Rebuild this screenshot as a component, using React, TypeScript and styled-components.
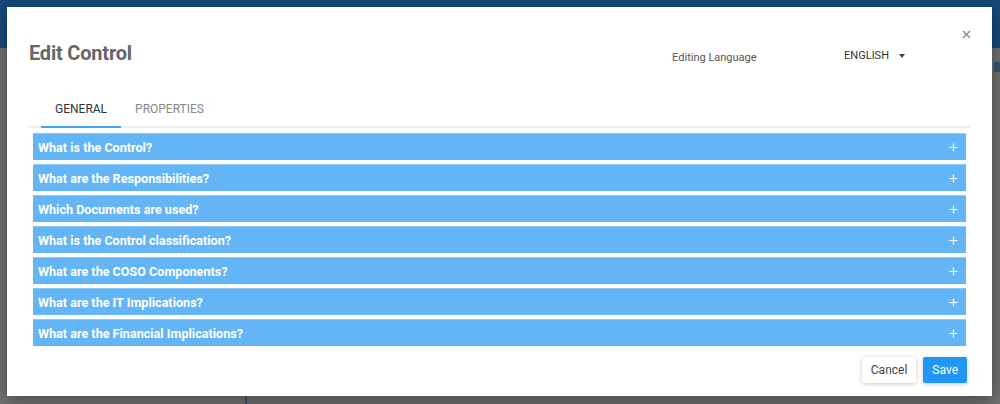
import React from 'react';
import styled, { createGlobalStyle } from 'styled-components';

const GlobalStyle = createGlobalStyle`
  html, body {
    margin: 0;
    padding: 0;
    width: 1000px;
    height: 404px;
    overflow: hidden;
    font-family: Roboto, 'Liberation Sans', sans-serif;
  }
`;

const Page = styled.div`
  position: relative;
  width: 1000px;
  height: 404px;
  background: #b9b9b9;
  display: flex;
  flex-direction: column;
`;

const AppBar = styled.div`
  height: 48px;
  background: #237bc6;
`;

const PageBody = styled.div`
  flex: 1;
  display: flex;
`;

const Sidebar = styled.div`
  width: 245px;
  border-right: 2px solid #5d8fbf;
  background: #bdbdbd;
`;

const Content = styled.div`
  flex: 1;
  display: flex;
  justify-content: flex-end;
  padding-top: 14px;
`;

const PageChip = styled.div`
  width: 6px;
  height: 10px;
  background: #5d8fbf;
`;

const Overlay = styled.div`
  position: absolute;
  inset: 0;
  background: rgba(0, 0, 0, 0.4);
  display: flex;
  padding: 7px 8px 8px 7px;
`;

const Modal = styled.div`
  position: relative;
  width: 985px;
  height: 389px;
  background: #fff;
  box-shadow: 0 4px 16px rgba(0, 0, 0, 0.35);
  display: flex;
  flex-direction: column;
  padding: 34px 22px 0 22px;
  box-sizing: border-box;
`;

const CloseButton = styled.button`
  position: absolute;
  top: 19px;
  right: 18px;
  width: 16px;
  height: 16px;
  padding: 0;
  border: none;
  background: none;
  display: grid;
  place-items: center;
  cursor: pointer;
`;

const Header = styled.div`
  display: flex;
  align-items: flex-start;
  height: 24px;
`;

const Title = styled.h2`
  margin: 0;
  flex: 1;
  font-size: 20px;
  line-height: 24px;
  font-weight: 700;
  color: #666;
  letter-spacing: -0.2px;
`;

const LangLabel = styled.span`
  font-size: 11px;
  line-height: 16px;
  margin-top: 9px;
  color: #555;
  width: 172px;
`;

const LangSelect = styled.div`
  display: flex;
  align-items: center;
  gap: 10px;
  margin-top: 7px;
  margin-right: 65px;
  font-size: 11px;
  line-height: 16px;
  color: #333;
`;

const Caret = styled.span`
  width: 0;
  height: 0;
  border-left: 3.5px solid transparent;
  border-right: 3.5px solid transparent;
  border-top: 4px solid #444;
  margin-top: -1px;
`;

const TabBar = styled.div`
  display: flex;
  margin-top: 27px;
  padding-left: 12px;
  border-bottom: 2px solid #eeeeee;
`;

const Tab = styled.div<{ $active?: boolean }>`
  height: 34px;
  padding: 0 14px;
  display: flex;
  align-items: center;
  font-size: 12px;
  text-transform: uppercase;
  color: ${(p) => (p.$active ? '#333' : '#888')};
  border-bottom: 2px solid ${(p) => (p.$active ? '#42a5f5' : 'transparent')};
  margin-bottom: -2px;
`;

const Accordion = styled.div`
  display: flex;
  flex-direction: column;
  gap: 4px;
  margin: 5px 4px 0 4px;
`;

const Section = styled.div`
  height: 27px;
  background: #64b5f6;
  border-top: 1px solid #8cc8f8;
  box-sizing: border-box;
  display: flex;
  align-items: center;
  justify-content: space-between;
  padding: 0 8px 0 5px;
  color: #fff;
  font-size: 12.6px;
  font-weight: 700;
`;

const Footer = styled.div`
  display: flex;
  justify-content: flex-end;
  gap: 7px;
  margin-top: 11px;
  padding-right: 3px;
`;

const Button = styled.button<{ $primary?: boolean }>`
  height: 26px;
  padding: 0 9px;
  border: none;
  border-radius: 2px;
  font-family: Roboto, 'Liberation Sans', sans-serif;
  font-size: 12px;
  color: ${(p) => (p.$primary ? '#fff' : '#444')};
  background: ${(p) => (p.$primary ? '#2196f3' : '#fff')};
  box-shadow: 0 1px 4px rgba(0, 0, 0, 0.22);
  cursor: pointer;
`;

const Plus = () => (
  <svg width="9" height="9" viewBox="0 0 9 9">
    <path d="M4.5 0.5v8M0.5 4.5h8" stroke="#fff" strokeWidth="1.2" />
  </svg>
);

const sections = [
  'What is the Control?',
  'What are the Responsibilities?',
  'Which Documents are used?',
  'What is the Control classification?',
  'What are the COSO Components?',
  'What are the IT Implications?',
  'What are the Financial Implications?',
];

const App = () => {
  return (
    <>
      <GlobalStyle />
      <Page>
        <AppBar />
        <PageBody>
          <Sidebar />
          <Content>
            <PageChip />
          </Content>
        </PageBody>
        <Overlay>
          <Modal>
            <CloseButton aria-label="close">
              <svg width="9" height="9" viewBox="0 0 9 9">
                <path d="M1 1l7 7M8 1l-7 7" stroke="#888" strokeWidth="1.4" />
              </svg>
            </CloseButton>
            <Header>
              <Title>Edit Control</Title>
              <LangLabel>Editing Language</LangLabel>
              <LangSelect>
                ENGLISH
                <Caret />
              </LangSelect>
            </Header>
            <TabBar>
              <Tab $active>General</Tab>
              <Tab>Properties</Tab>
            </TabBar>
            <Accordion>
              {sections.map((s) => (
                <Section key={s}>
                  <span>{s}</span>
                  <Plus />
                </Section>
              ))}
            </Accordion>
            <Footer>
              <Button>Cancel</Button>
              <Button $primary>Save</Button>
            </Footer>
          </Modal>
        </Overlay>
      </Page>
    </>
  );
};

export default App;
